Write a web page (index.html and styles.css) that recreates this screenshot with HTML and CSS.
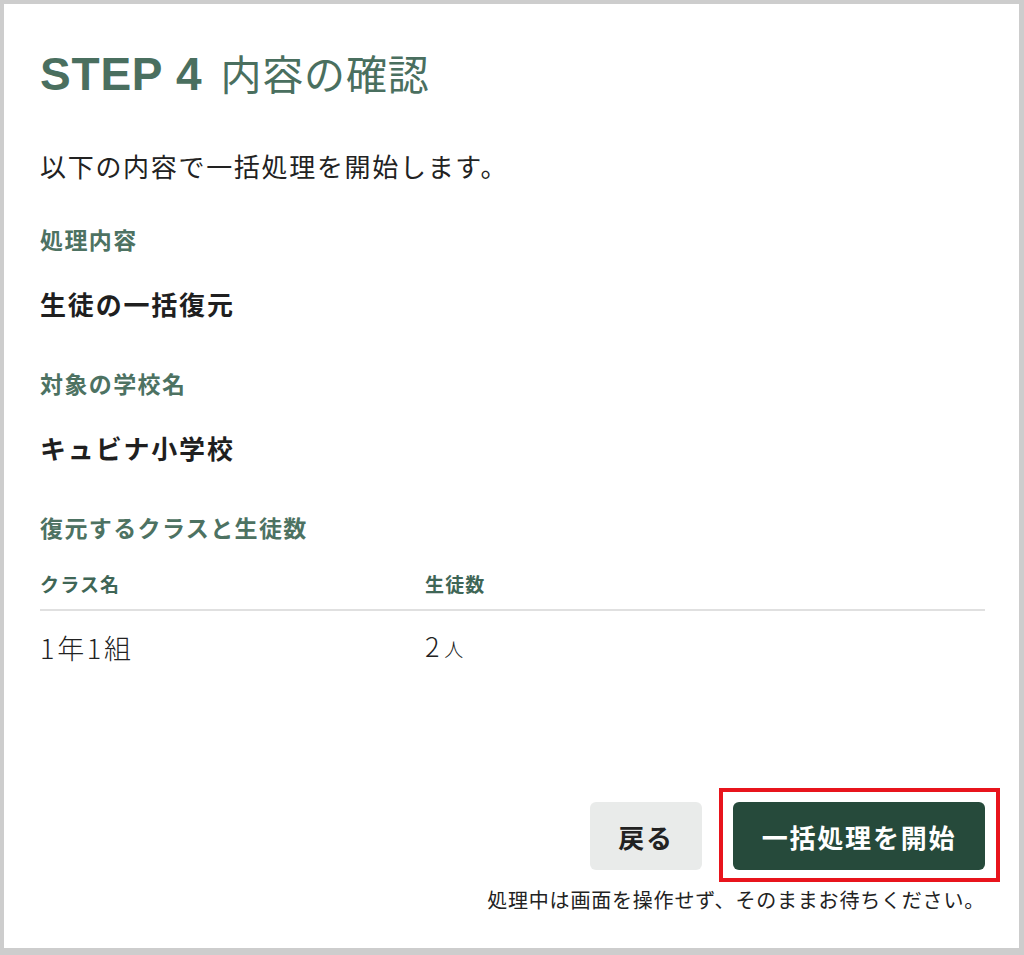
FILE: index.html
```html
<!DOCTYPE html>
<html lang="ja">
<head>
  <meta charset="UTF-8" />
  <meta name="viewport" content="width=device-width, initial-scale=1.0"/>
  <title>STEP 4 内容の確認</title>
  <link rel="stylesheet" href="styles.css">
</head>
<body>

  <div class="dialog">
    <h1 class="step-title"><span class="step-no">STEP 4</span><span class="step-name">内容の確認</span></h1>

    <p class="lead">以下の内容で一括処理を開始します。</p>

    <h2 class="label label-first">処理内容</h2>
    <p class="value">生徒の一括復元</p>

    <h2 class="label">対象の学校名</h2>
    <p class="value">キュビナ小学校</p>

    <h2 class="label">復元するクラスと生徒数</h2>
    <table class="class-table">
      <thead>
        <tr>
          <th class="col-class">クラス名</th>
          <th>生徒数</th>
        </tr>
      </thead>
      <tbody>
        <tr>
          <td>1年1組</td>
          <td>2<span class="unit">人</span></td>
        </tr>
      </tbody>
    </table>

    <div class="footer">
      <div class="actions">
        <button class="btn btn-back">戻る</button>
        <div class="highlight">
          <button class="btn btn-start">一括処理を開始</button>
        </div>
      </div>
      <p class="note">処理中は画面を操作せず、そのままお待ちください。</p>
    </div>
  </div>

</body>
</html>
```

FILE: styles.css
```css
* {
  box-sizing: border-box;
}
body {
  margin: 0;
  background: #fff;
  color: #222;
  font-family: "Noto Sans CJK JP", "Noto Sans", sans-serif;
  letter-spacing: 0.05em;
}
.dialog {
  display: flex;
  flex-direction: column;
  width: 1024px;
  height: 955px;
  padding: 40px 34px 34px 36px;
  border: 4px solid #cdcdcd;
  border-right-width: 5px;
  border-bottom-width: 7px;
  background: #fff;
}
.step-title {
  margin: 0;
  display: flex;
  align-items: baseline;
  color: #4a6f5f;
  line-height: 56px;
  font-weight: normal;
}
.step-no {
  font-family: "Liberation Sans", Arial, sans-serif;
  font-weight: bold;
  font-size: 46px;
}
.step-name {
  margin-left: 18px;
  font-size: 41px;
  font-weight: 400;
}
.lead {
  margin: 46px 0 0;
  font-size: 26px;
  line-height: 36px;
  letter-spacing: 0.065em;
}
.label {
  margin: 45px 0 0;
  font-size: 23px;
  line-height: 32px;
  font-weight: 600;
  letter-spacing: 0.06em;
  color: #4d7262;
}
.label-first {
  margin-top: 39px;
}
.value {
  margin: 31px 0 0;
  font-size: 26px;
  line-height: 36px;
  font-weight: bold;
  letter-spacing: 0.07em;
  color: #1f1f1f;
}
.class-table {
  width: 100%;
  margin-top: 27px;
  border-collapse: collapse;
}
.class-table th {
  padding: 0 0 11px;
  text-align: left;
  font-size: 19px;
  line-height: 28px;
  font-weight: 600;
  letter-spacing: 0.06em;
  color: #3f6656;
  border-bottom: 2px solid #e0e0e0;
}
.class-table .col-class {
  width: 385px;
}
.class-table td {
  padding: 17px 0 0;
  font-size: 27px;
  line-height: 36px;
  font-weight: 300;
  letter-spacing: 0.1em;
  color: #222;
}
.unit {
  font-size: 19px;
  margin-left: 2px;
}
.footer {
  margin-top: auto;
}
.actions {
  display: flex;
  justify-content: flex-end;
  align-items: center;
  gap: 31px;
}
.btn {
  height: 68px;
  padding: 0 28px;
  border: none;
  border-radius: 6px;
  font-family: inherit;
  font-size: 26px;
  font-weight: bold;
  letter-spacing: 0.07em;
  cursor: pointer;
}
.btn-back {
  width: 112px;
  padding: 0;
  background: #e9ebea;
  color: #222;
}
.btn-start {
  display: block;
  width: 252px;
  padding: 0;
  background: #264a3b;
  color: #fff;
}
.highlight {
  position: relative;
}
.highlight::after {
  content: "";
  position: absolute;
  top: -14px;
  right: -15px;
  bottom: -12px;
  left: -14px;
  border: 4px solid #e8141c;
  pointer-events: none;
}
.note {
  margin: 16px 0 0;
  text-align: right;
  font-size: 20px;
  line-height: 28px;
  color: #222;
}
```
